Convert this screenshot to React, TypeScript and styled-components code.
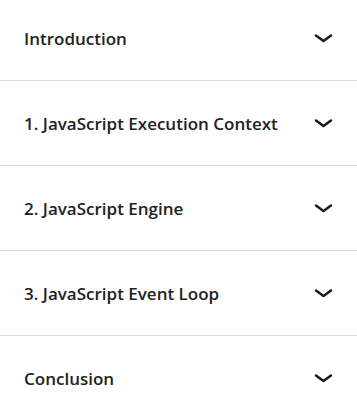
import React from "react";
import styled, { createGlobalStyle } from "styled-components";

const Global = createGlobalStyle`
  html, body { margin: 0; padding: 0; background: #ffffff; }
  body { font-family: "Open Sans", "Noto Sans", sans-serif; overflow: hidden; }
`;

const List = styled.div`
  display: flex;
  flex-direction: column;
  margin-top: -4px;
`;

const Row = styled.div`
  display: flex;
  align-items: center;
  justify-content: space-between;
  height: 84px;
  padding: 0 24px 0 24px;
  border-bottom: 1px solid #dddddd;
  box-sizing: content-box;
`;

const Title = styled.span`
  font-size: 17px;
  font-weight: 600;
  color: #222222;
  letter-spacing: 0;
  line-height: 24px;
  padding-top: 1px;
`;

const Chevron = styled.svg`
  width: 19px;
  height: 10px;
  flex: none;
`;

const items = [
  "Introduction",
  "1. JavaScript Execution Context",
  "2. JavaScript Engine",
  "3. JavaScript Event Loop",
  "Conclusion",
];

export default function App() {
  return (
    <>
      <Global />
      <List>
        {items.map((t) => (
          <Row key={t}>
            <Title>{t}</Title>
            <Chevron viewBox="0 0 19 10">
              <polyline points="2,2.5 9.5,8 17,2.5" fill="none" stroke="#1a1a1a" strokeWidth="2.5" strokeLinecap="round" strokeLinejoin="round" />
            </Chevron>
          </Row>
        ))}
      </List>
    </>
  );
}
